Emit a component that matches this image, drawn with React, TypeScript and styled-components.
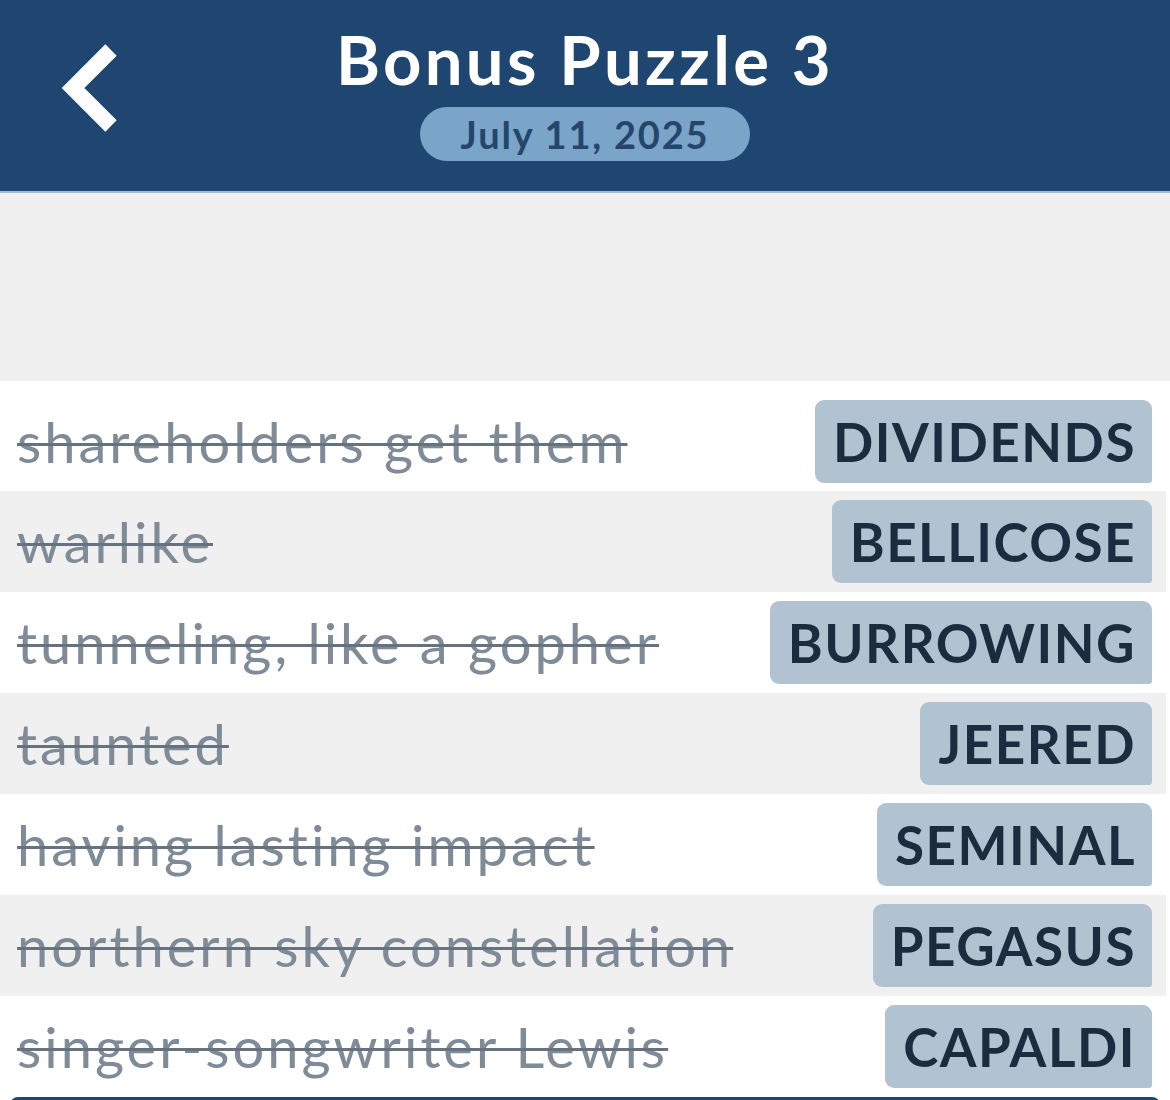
import React from "react";
import styled, { createGlobalStyle } from "styled-components";

const Global = createGlobalStyle`
  html, body { margin: 0; padding: 0; background: #ffffff; }
  body { font-family: Lato, "Noto Sans", sans-serif; width: 1170px; height: 1100px; overflow: hidden; }
`;

const Page = styled.div`
  width: 1170px;
  height: 1100px;
  display: flex;
  flex-direction: column;
  background: #ffffff;
  overflow: hidden;
  & > * { flex-shrink: 0; }
`;

const Header = styled.header`
  height: 191px;
  background: #1e4670;
  border-bottom: 2px solid #9fbcd6;
  display: grid;
  grid-template-columns: 170px 1fr 170px;
  align-items: start;
`;

const BackButton = styled.button`
  border: none;
  background: transparent;
  padding: 0;
  margin: 40px 0 0 57px;
  width: 70px;
  height: 96px;
  display: flex;
  cursor: pointer;
`;

const TitleBlock = styled.div`
  display: flex;
  flex-direction: column;
  align-items: center;
  padding-top: 20px;
`;

const Title = styled.h1`
  margin: 0;
  color: #ffffff;
  font-family: Lato, sans-serif;
  font-weight: 700;
  font-size: 67px;
  line-height: 78px;
  letter-spacing: 3.3px;
`;

const DatePill = styled.div`
  margin-top: 9px;
  width: 330px;
  height: 54px;
  border-radius: 27px;
  background: #7aa4c8;
  color: #24466b;
  font-family: Lato, sans-serif;
  font-weight: 700;
  font-size: 38px;
  display: flex;
  align-items: center;
  justify-content: center;
  letter-spacing: 1.8px;
`;

const Spacer = styled.div`
  height: 188px;
  background: #f0f0f0;
`;

const List = styled.div`
  display: flex;
  flex-direction: column;
`;

const Row = styled.div<{ $shade: boolean; $first?: boolean }>`
  height: ${(p) => (p.$first ? 110 : 101)}px;
  box-sizing: border-box;
  margin-right: 4px;
  padding: ${(p) => (p.$first ? "19px" : "9px")} 14px 0 17px;
  background: ${(p) => (p.$shade ? "#f0f0f0" : "#ffffff")};
  display: flex;
  align-items: flex-start;
  justify-content: space-between;
`;

const Clue = styled.span`
  height: 83px;
  display: flex;
  align-items: center;
  color: #7f8b97;
  font-family: Lato, sans-serif;
  font-size: 56px;
  letter-spacing: 3px;
  text-decoration: line-through;
  text-decoration-color: #66727e;
  text-decoration-thickness: 3px;
  white-space: nowrap;
`;

const Answer = styled.span`
  height: 83px;
  box-sizing: border-box;
  padding: 0 16px 0 18px;
  display: flex;
  align-items: center;
  background: #b1c3d1;
  border-radius: 9px 9px 3px 9px;
  color: #1b2c3f;
  font-family: Lato, sans-serif;
  font-weight: 700;
  font-size: 53px;
  letter-spacing: 1.5px;
  white-space: nowrap;
`;

const BottomBar = styled.div`
  height: 12px;
  margin: 0 10px;
  background: #1e4670;
  border-radius: 8px 8px 0 0;
`;

const rows = [
  ["shareholders get them", "DIVIDENDS"],
  ["warlike", "BELLICOSE"],
  ["tunneling, like a gopher", "BURROWING"],
  ["taunted", "JEERED"],
  ["having lasting impact", "SEMINAL"],
  ["northern sky constellation", "PEGASUS"],
  ["singer-songwriter Lewis", "CAPALDI"],
];

export default function App() {
  return (
    <Page>
      <Global />
      <Header>
        <BackButton aria-label="Back">
          <svg width="70" height="96" viewBox="0 0 70 96">
            <polyline
              points="54,10 16,48 54,86"
              fill="none"
              stroke="#ffffff"
              strokeWidth="16"
              strokeLinejoin="miter"
              strokeLinecap="butt"
            />
          </svg>
        </BackButton>
        <TitleBlock>
          <Title>Bonus Puzzle 3</Title>
          <DatePill>July 11, 2025</DatePill>
        </TitleBlock>
        <div />
      </Header>
      <Spacer />
      <List>
        {rows.map(([clue, answer], i) => (
          <Row key={answer} $shade={i % 2 === 1} $first={i === 0}>
            <Clue>{clue}</Clue>
            <Answer>{answer}</Answer>
          </Row>
        ))}
      </List>
      <BottomBar />
    </Page>
  );
}
